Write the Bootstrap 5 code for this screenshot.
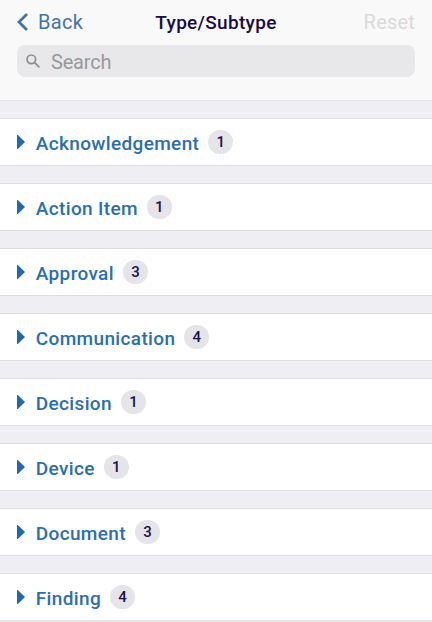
<!DOCTYPE html>
<html lang="en">
<head>
<meta charset="utf-8">
<meta name="viewport" content="width=device-width, initial-scale=1">
<title>Type/Subtype</title>
<link href="https://cdn.jsdelivr.net/npm/bootstrap@5.3.0/dist/css/bootstrap.min.css" rel="stylesheet">
<style>
body { font-family: Roboto, "Liberation Sans", sans-serif; background: #eeeef3; height: 622px; overflow: hidden; }
.topbar { height: 101px; background: #f9f9f9; border-bottom: 1px solid #e6e6e8; padding: 0 17px; }
.titlebar { height: 45px; font-size: 20px; line-height: 45px; }
.back-btn { color: #4474a6; letter-spacing: .3px; gap: 10px; }
.back-btn svg { margin-bottom: 2px; }
.screen-title { color: #190b47; font-size: 19px; font-weight: 500; letter-spacing: .3px; }
.reset-btn { color: #dadada; letter-spacing: .2px; }
.search-field { height: 32px; background: #e8e8ea; border-radius: 8px; padding-left: 9px; gap: 11px; }
.search-field input { font-size: 20px; letter-spacing: -.2px; color: #555; height: 32px; padding: 2px 0 0; }
.search-field input::placeholder { color: #98989a; opacity: 1; }
.type-list { padding-top: 17px; gap: 17px; }
.type-row { height: 48px; background: #fff; border-top: 1px solid #dedee0; border-bottom: 1px solid #dedee0; padding-left: 16.5px; color: #2a6fac; font-size: 19px; font-weight: 500; letter-spacing: .35px; }
.type-row svg { color: #1f69ad; }
.type-name { margin-left: 11.3px; line-height: 24px; padding-top: 3px; }
.count-pill { width: 25px; height: 24px; margin-left: 9px; background: #e4e4e9; color: #1e0e4b; font-size: 15px; line-height: 24px; letter-spacing: 0; }
</style>
</head>
<body>
<header class="topbar">
  <div class="titlebar row g-0">
    <div class="col d-flex align-items-center back-btn">
      <svg width="11" height="18" viewBox="0 0 11 18" fill="none" stroke="currentColor" stroke-width="2.8"><path d="M10 1 2 9l8 8"/></svg>
      <span>Back</span>
    </div>
    <div class="col-auto screen-title">Type/Subtype</div>
    <div class="col text-end reset-btn">Reset</div>
  </div>
  <div class="search-field d-flex align-items-center">
    <svg width="14" height="14" viewBox="0 0 14 14" fill="none" stroke="#8e8e90" stroke-width="1.7"><circle cx="5.3" cy="5.3" r="4.3"/><path d="m8.4 8.4 5 5"/></svg>
    <input class="flex-grow-1 border-0 bg-transparent" type="text" placeholder="Search" aria-label="Search">
  </div>
</header>
<main class="type-list d-flex flex-column">
  <div class="type-row d-flex align-items-center flex-shrink-0"><svg width="8" height="14" viewBox="0 0 8 14" fill="currentColor"><path d="M0 0h.8L8 7 .8 14H0z"/></svg><span class="type-name">Acknowledgement</span><span class="count-pill rounded-pill text-center">1</span></div>
  <div class="type-row d-flex align-items-center flex-shrink-0"><svg width="8" height="14" viewBox="0 0 8 14" fill="currentColor"><path d="M0 0h.8L8 7 .8 14H0z"/></svg><span class="type-name">Action Item</span><span class="count-pill rounded-pill text-center">1</span></div>
  <div class="type-row d-flex align-items-center flex-shrink-0"><svg width="8" height="14" viewBox="0 0 8 14" fill="currentColor"><path d="M0 0h.8L8 7 .8 14H0z"/></svg><span class="type-name">Approval</span><span class="count-pill rounded-pill text-center">3</span></div>
  <div class="type-row d-flex align-items-center flex-shrink-0"><svg width="8" height="14" viewBox="0 0 8 14" fill="currentColor"><path d="M0 0h.8L8 7 .8 14H0z"/></svg><span class="type-name">Communication</span><span class="count-pill rounded-pill text-center">4</span></div>
  <div class="type-row d-flex align-items-center flex-shrink-0"><svg width="8" height="14" viewBox="0 0 8 14" fill="currentColor"><path d="M0 0h.8L8 7 .8 14H0z"/></svg><span class="type-name">Decision</span><span class="count-pill rounded-pill text-center">1</span></div>
  <div class="type-row d-flex align-items-center flex-shrink-0"><svg width="8" height="14" viewBox="0 0 8 14" fill="currentColor"><path d="M0 0h.8L8 7 .8 14H0z"/></svg><span class="type-name">Device</span><span class="count-pill rounded-pill text-center">1</span></div>
  <div class="type-row d-flex align-items-center flex-shrink-0"><svg width="8" height="14" viewBox="0 0 8 14" fill="currentColor"><path d="M0 0h.8L8 7 .8 14H0z"/></svg><span class="type-name">Document</span><span class="count-pill rounded-pill text-center">3</span></div>
  <div class="type-row d-flex align-items-center flex-shrink-0"><svg width="8" height="14" viewBox="0 0 8 14" fill="currentColor"><path d="M0 0h.8L8 7 .8 14H0z"/></svg><span class="type-name">Finding</span><span class="count-pill rounded-pill text-center">4</span></div>
</main>
<script src="https://cdn.jsdelivr.net/npm/bootstrap@5.3.0/dist/js/bootstrap.bundle.min.js"></script>
</body>
</html>
